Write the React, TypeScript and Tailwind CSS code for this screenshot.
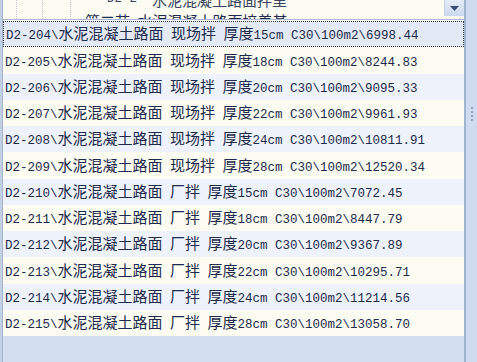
import React from "react";

const rows = [
  "D2-204\\水泥混凝土路面 现场拌 厚度15cm C30\\100m2\\6998.44",
  "D2-205\\水泥混凝土路面 现场拌 厚度18cm C30\\100m2\\8244.83",
  "D2-206\\水泥混凝土路面 现场拌 厚度20cm C30\\100m2\\9095.33",
  "D2-207\\水泥混凝土路面 现场拌 厚度22cm C30\\100m2\\9961.93",
  "D2-208\\水泥混凝土路面 现场拌 厚度24cm C30\\100m2\\10811.91",
  "D2-209\\水泥混凝土路面 现场拌 厚度28cm C30\\100m2\\12520.34",
  "D2-210\\水泥混凝土路面 厂拌 厚度15cm C30\\100m2\\7072.45",
  "D2-211\\水泥混凝土路面 厂拌 厚度18cm C30\\100m2\\8447.79",
  "D2-212\\水泥混凝土路面 厂拌 厚度20cm C30\\100m2\\9367.89",
  "D2-213\\水泥混凝土路面 厂拌 厚度22cm C30\\100m2\\10295.71",
  "D2-214\\水泥混凝土路面 厂拌 厚度24cm C30\\100m2\\11214.56",
  "D2-215\\水泥混凝土路面 厂拌 厚度28cm C30\\100m2\\13058.70",
];

function Text({ text }: { text: string }) {
  const parts = text.split(/([\u4e00-\u9fff]+)/);
  return (
    <>
      {parts.map((p, i) =>
        /[\u4e00-\u9fff]/.test(p) ? (
          <span key={i} className="text-[15px] leading-none font-['Noto_Sans_CJK_SC',sans-serif]">
            {p}
          </span>
        ) : (
          <span key={i} className="leading-none whitespace-pre">
            {p}
          </span>
        )
      )}
    </>
  );
}

export default function App() {
  return (
    <div className="flex w-[477px] h-[362px] bg-[#d3dff0] overflow-hidden font-['Liberation_Mono','Noto_Sans_CJK_SC',monospace] text-[12.5px] text-[#1e2b4c]">
      {/* left strip */}
      <div className="w-[3px] h-full bg-[#c4d1e5] border-r border-[#a3b4cd]" />
      {/* main column */}
      <div className="w-[461px] flex flex-col">
        {/* top: partially hidden tree + combo button */}
        <div className="h-[20px] flex bg-[#fcfcf3] border-b border-[#a9b9d1]">
          <div className="relative flex-1 overflow-hidden">
            <div className="absolute left-[13px] top-0 h-full border-l border-dotted border-[#c3c8d2]" />
            <div className="absolute left-[39px] top-0 h-full border-l border-dotted border-[#c3c8d2]" />
            <div className="absolute left-[67px] top-0 h-full border-l border-dotted border-[#c3c8d2]" />
            <div className="flex flex-col -mt-[11px]">
              <div className="h-[21px] flex items-center pl-[104px] text-[#3a4660]">
                <Text text={"D2-2  水泥混凝土路面拌里"} />
              </div>
              <div className="h-[21px] flex items-center pl-[82px] text-[#1e2b4c]">
                <Text text={"第二节 水泥混凝土路面培养基"} />
              </div>
            </div>
          </div>
          <div className="w-[20px] h-[16px] bg-gradient-to-b from-[#e4ecf8] to-[#cbd9ee] border-l border-[#c8d4e6] flex items-center justify-center">
            <svg width="9" height="5" viewBox="0 0 9 5">
              <path d="M0 0 H9 L4.5 5 Z" fill="#3d4d6e" />
            </svg>
          </div>
        </div>
        {/* list */}
        <div className="pt-[1px] bg-[#f6f8fc] flex flex-col">
          {rows.map((r, i) => {
            const sel = i === 0;
            const bg = sel ? "bg-[#e3eaf5]" : i % 2 === 1 ? "bg-[#fcfcf3]" : "bg-[#eef2fa]";
            return (
              <div
                key={i}
                className={`h-[26.25px] flex items-center pl-[2px] ${bg} ${
                  sel ? "border border-dotted border-[#3a3a3a] pl-[1px]" : ""
                }`}
              >
                <div className="flex items-baseline">
                  <Text text={r} />
                </div>
              </div>
            );
          })}
        </div>
        <div className="flex-1 bg-[#d3dff0]" />
      </div>
      {/* splitter */}
      <div className="w-[2px] h-full bg-[#a2b4d0]" />
      <div className="flex-1 h-full bg-[#cfdbee] flex flex-col items-center pt-[107px] gap-[2px]">
        <div className="w-[2px] h-[2px] bg-[#8fa3c2]" />
        <div className="w-[2px] h-[2px] bg-[#8fa3c2]" />
        <div className="w-[2px] h-[2px] bg-[#8fa3c2]" />
        <div className="w-[2px] h-[2px] bg-[#8fa3c2]" />
      </div>
    </div>
  );
}
